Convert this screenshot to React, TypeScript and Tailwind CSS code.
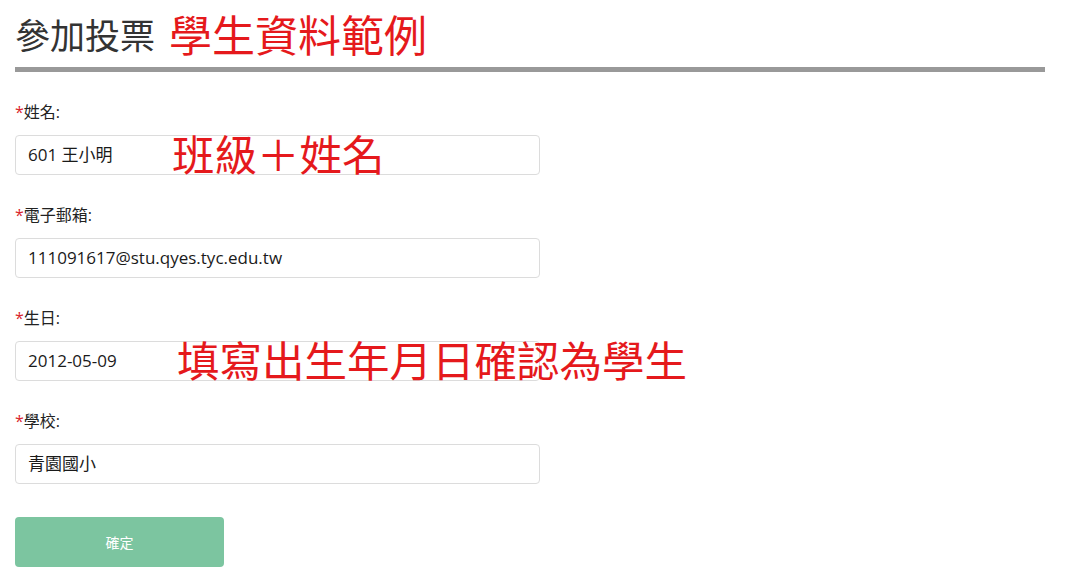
import React from "react";

const font = {
  fontFamily:
    '"Segoe UI", "Open Sans", "Noto Sans CJK TC", "Noto Sans", sans-serif',
};

function Field({
  label,
  value,
  note,
  noteLeft,
}: {
  label: string;
  value: string;
  note?: string;
  noteLeft?: string;
}) {
  return (
    <div className="mb-[28px]">
      <div className="h-[24px] leading-[24px] text-[16px] text-[#222]">
        <span className="text-[#d9262c]">*</span>
        {label}:
      </div>
      <div className="relative mt-[11px]">
        <div className="w-[525px] h-[40px] border border-[#dcdcdc] rounded-[4px] bg-white flex items-center px-[12px] text-[17px] text-[#1a1a1a]">
          {value}
        </div>
        {note && (
          <div
            className={`absolute top-1/2 -translate-y-1/2 whitespace-nowrap text-[42.5px] leading-none text-[#e5191c] ${noteLeft}`}
          >
            {note}
          </div>
        )}
      </div>
    </div>
  );
}

export default function App() {
  return (
    <div className="w-[1069px] h-[588px] bg-white overflow-hidden" style={font}>
      <div className="pl-[15px] w-[1045px]">
        <div className="pt-[4px] h-[67px] flex items-center gap-[14px] whitespace-nowrap">
          <span className="text-[35px] leading-none text-[#333]">參加投票</span>
          <span className="text-[43px] leading-none text-[#e5191c]">學生資料範例</span>
        </div>
        <div className="h-[5px] bg-[#999999]" />
        <div className="pt-[28px]">
          <Field label="姓名" value="601 王小明" note="班級＋姓名" noteLeft="left-[157px]" />
          <Field label="電子郵箱" value="111091617@stu.qyes.tyc.edu.tw" />
          <Field
            label="生日"
            value="2012-05-09"
            note="填寫出生年月日確認為學生"
            noteLeft="left-[162px]"
          />
          <Field label="學校" value="青園國小" />
          <button className="mt-[5px] w-[209px] h-[50px] rounded-[4px] bg-[#7cc5a0] text-white text-[14px]">
            確定
          </button>
        </div>
      </div>
    </div>
  );
}
